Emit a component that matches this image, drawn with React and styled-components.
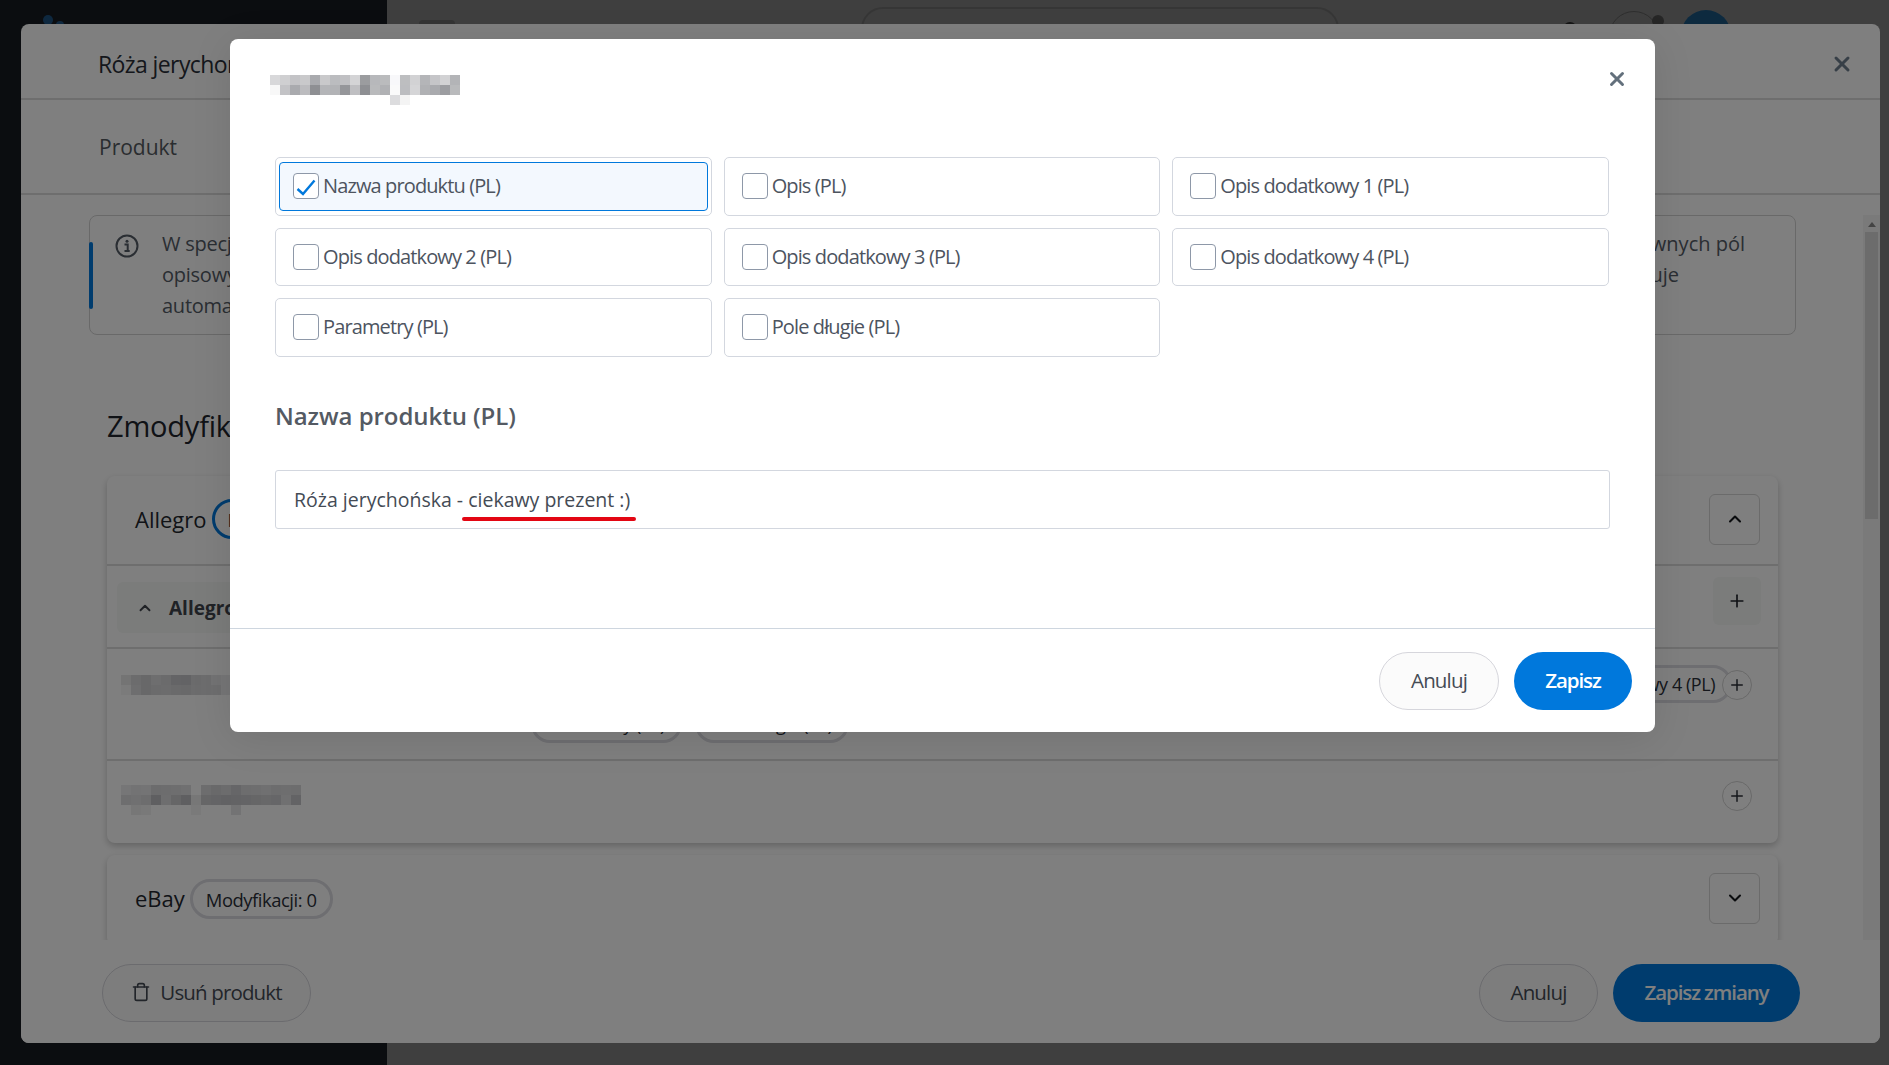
import React from 'react';
import styled, { createGlobalStyle } from 'styled-components';
import { Trash, ChevronUp, ChevronDown, Plus, X } from 'lucide-react';

const Global = createGlobalStyle`
  html, body { margin: 0; padding: 0; height: 100%; overflow: hidden; }
  #root { height: 100%; }
  * { box-sizing: border-box; }
  body { font-family: "Open Sans", "Noto Sans", "Liberation Sans", sans-serif; color: #3f4650; }
`;

const Stage = styled.div`
  position: relative;
  width: 100%;
  height: 100%;
  overflow: hidden;
`;
const Shell = styled.div`
  display: grid;
  grid-template-columns: 387px 1fr;
  height: 100%;
`;
const Sidebar = styled.aside`
  background: #2c3440;
  padding: 15px 0 0 43px;
`;
const LogoMark = styled.svg`
  display: block;
  width: 40px;
  height: 20px;
`;
const Main = styled.main`
  background: #fcfcfc;
`;
const TopBar = styled.header`
  display: flex;
  align-items: flex-start;
  height: 70px;
`;
const Burger = styled.div`
  width: 36px;
  height: 30px;
  margin: 20px 0 0 32px;
  border-radius: 4px;
  background: #d0d0d0;
`;
const Search = styled.div`
  width: 478px;
  height: 60px;
  margin: 7px 0 0 406px;
  border: 2px solid #dadada;
  border-radius: 22px;
`;
const Bell = styled.div`
  width: 14px;
  height: 14px;
  margin: 22px 0 0 224px;
  border-radius: 50%;
  background: #555;
`;
const HelpCircle = styled.div`
  position: relative;
  width: 50px;
  height: 50px;
  margin: 11px 0 0 32px;
  border: 1px solid #bbb;
  border-radius: 50%;
  &::after {
    content: '';
    position: absolute;
    right: -6px;
    top: 3px;
    width: 12px;
    height: 12px;
    border-radius: 50%;
    background: #999;
  }
`;
const Avatar = styled.div`
  width: 50px;
  height: 50px;
  margin: 10px 0 0 22px;
  border-radius: 50%;
  background: #34a8ff;
`;

const Backdrop = styled.div`
  position: absolute;
  inset: 0;
  background: rgba(0, 0, 0, 0.5);
`;

/* Outer modal (product editor) */
const EditorModal = styled.section`
  position: absolute;
  left: 21px;
  top: 24px;
  width: 1859px;
  height: 1019px;
  display: flex;
  flex-direction: column;
  background: #fff;
  border-radius: 8px;
  overflow: hidden;
`;
const EditorHead = styled.header`
  display: flex;
  align-items: center;
  justify-content: space-between;
  flex: 0 0 76px;
  padding: 6px 26px 0 77px;
  border-bottom: 2px solid #dcdcdc;
  font-size: 23px;
  letter-spacing: -0.6px;
  color: #2a2f38;
`;
const EditorTitle = styled.h2`
  margin: 0;
  font: inherit;
`;
const Tabs = styled.nav`
  display: flex;
  align-items: center;
  flex: 0 0 95px;
  padding: 0 0 0 78px;
  border-bottom: 2px solid #dcdcdc;
  font-size: 21px;
  color: #555a60;
`;
const BodyRow = styled.div`
  display: flex;
  flex: 1;
  min-height: 0;
`;
const Scroller = styled.div`
  flex: 1;
  min-width: 0;
  padding: 20px 67px 0 68px;
  overflow: hidden;
`;
const ScrollTrack = styled.div`
  flex: 0 0 17px;
  margin-top: 20px;
  background: #f4f4f4;
  padding: 0 2px;
  display: flex;
  flex-direction: column;
`;
const ScrollArrow = styled.div`
  width: 0;
  height: 0;
  margin: 7px auto 5px;
  border-left: 4px solid transparent;
  border-right: 4px solid transparent;
  border-bottom: 5px solid #888;
`;
const ScrollThumb = styled.div`
  height: 287px;
  background: #d8d8d8;
`;
const InfoBox = styled.div`
  position: relative;
  display: flex;
  height: 120px;
  padding: 12px 0 0 25px;
  border: 1.5px solid #d2d2d2;
  border-radius: 8px;
`;
const InfoAccent = styled.span`
  position: absolute;
  left: -1px;
  top: 26px;
  width: 4px;
  height: 67px;
  border-radius: 2px;
  background: #0078dc;
`;
const InfoIcon = styled.svg`
  flex: 0 0 24px;
  width: 24px;
  height: 24px;
  margin: 6px 23px 0 0;
`;
const InfoText = styled.div`
  font-size: 20px;
  line-height: 31px;
  color: #555c66;
`;
const InfoLine = styled.div`
  display: flex;
  justify-content: space-between;
  width: ${p => p.$width}px;
  height: 31px;
`;
const InfoLead = styled.span`
  letter-spacing: -0.25px;
`;
const SectionTitle = styled.h3`
  margin: 73px 0 32px 18px;
  font-size: 29px;
  line-height: 36px;
  font-weight: 500;
  letter-spacing: -0.2px;
  color: #20242c;
`;
const Card = styled.article`
  margin: 0 18px 12px;
  background: #fff;
  border-radius: 8px;
  box-shadow: 0 3px 7px rgba(0, 0, 0, 0.22);
`;
const CardHead = styled.div`
  display: flex;
  align-items: center;
  height: 90px;
  padding: 0 18px 2px 28px;
  border-bottom: 2px solid ${p => (p.$ruled ? '#dcdcdc' : 'transparent')};
`;
const CardName = styled.span`
  font-size: 22px;
  color: #23272e;
`;
const CountPill = styled.span`
  display: inline-flex;
  align-items: center;
  height: 40px;
  margin: ${p => (p.$active ? '0' : '2px')} 0 0 5px;
  padding: 0 13px;
  border: 3px solid ${p => (p.$active ? '#0078dc' : '#dcdce2')};
  border-radius: 20px;
  font-size: 18.4px;
  letter-spacing: -0.45px;
  color: #2a2f38;
`;
const SquareButton = styled.button`
  display: flex;
  align-items: center;
  justify-content: center;
  width: 51px;
  height: 51px;
  margin-left: auto;
  padding: 0;
  background: transparent;
  border: 1.5px solid #d6d6d6;
  border-radius: 6px;
  color: #15181d;
`;
const GroupRow = styled.div`
  display: flex;
  justify-content: space-between;
  height: 83px;
  padding: 11px 17px 0 10px;
  border-bottom: 2px solid #dcdcdc;
`;
const GroupLabel = styled.div`
  display: flex;
  align-items: center;
  gap: 15px;
  width: 800px;
  height: 51px;
  margin-top: 5px;
  padding-left: 19px;
  border-radius: 6px;
  background: #f6f8f7;
  font-size: 19px;
  font-weight: 700;
  color: #40454c;
`;
const GroupAdd = styled.button`
  display: flex;
  align-items: center;
  justify-content: center;
  width: 48px;
  height: 48px;
  padding: 0;
  border: 0;
  border-radius: 6px;
  background: #f6f8f7;
  color: #20242b;
`;
const FieldRow = styled.div`
  position: relative;
  display: flex;
  height: ${p => p.$height}px;
  padding: ${p => p.$pad}px 26px 0 14px;
  border-bottom: ${p => (p.$ruled ? '2px solid #dcdcdc' : '0')};
`;
const FieldName = styled.div`
  display: flex;
  align-items: flex-start;
  flex: 0 0 410px;
  padding-top: 10px;
  font-size: 17px;
  color: #333;
`;
const PillGroup = styled.div`
  display: flex;
  flex: 1;
  flex-direction: column;
  gap: 2px;
  margin-right: -10px;
  min-width: 0;
`;
const PillRow = styled.div`
  display: flex;
  justify-content: ${p => (p.$end ? 'flex-end' : 'flex-start')};
  gap: 13px;
`;
const Pill = styled.span`
  display: inline-flex;
  align-items: center;
  flex: none;
  height: 38px;
  padding: 0 14px;
  border: 3px solid #dcdce2;
  border-radius: 19px;
  font-size: 18px;
  letter-spacing: -0.45px;
  color: #2a2f38;
  white-space: nowrap;
`;
const RoundAdd = styled.button`
  position: relative;
  display: flex;
  align-items: center;
  justify-content: center;
  flex: 0 0 30px;
  width: 30px;
  height: 30px;
  margin: ${p => p.$top}px 0 0 auto;
  padding: 0;
  background: #fff;
  border: 1px solid #d2d2d2;
  border-radius: 50%;
  color: #2c3138;
`;
const EditorFoot = styled.footer`
  display: flex;
  flex: 0 0 103px;
  gap: 15px;
  padding: 24px 80px 0 81px;
  background: #fff;
`;
const PillButton = styled.button`
  display: inline-flex;
  align-items: center;
  justify-content: center;
  gap: 9px;
  width: ${p => p.$width}px;
  height: 58px;
  padding: 0 0 2px;
  border-radius: 29px;
  border: 1px solid ${p => (p.$primary ? 'transparent' : '#d6d6dc')};
  background: ${p => (p.$primary ? '#0078dc' : '#fbfbfb')};
  color: ${p => (p.$primary ? '#fff' : '#454b55')};
  font-family: inherit;
  font-size: 20.5px;
  font-weight: ${p => (p.$primary ? 600 : 500)};
  letter-spacing: ${p => (p.$primary ? '-1.1px' : '-0.85px')};
  margin-left: ${p => (p.$push ? 'auto' : '0')};
`;

/* Front dialog */
const FieldDialog = styled.section`
  position: absolute;
  left: 230px;
  top: 39px;
  width: 1425px;
  height: 693px;
  display: flex;
  flex-direction: column;
  background: #fff;
  border-radius: 8px;
  box-shadow: 0 6px 40px rgba(0, 0, 0, 0.1);
`;
const DialogHead = styled.header`
  display: flex;
  justify-content: space-between;
  flex: 0 0 118px;
  padding: 36px 27px 0 40px;
`;
const CloseButton = styled.button`
  display: flex;
  width: 22px;
  height: 22px;
  margin-top: -7px;
  padding: 0;
  background: none;
  border: 0;
  color: #63707c;
`;
const MosaicSvg = styled.svg`
  display: block;
  flex: none;
`;
const DialogBody = styled.div`
  flex: 1;
  padding: 0 44px 0 45px;
`;
const OptionGrid = styled.div`
  display: grid;
  grid-template-columns: repeat(3, 1fr);
  grid-auto-rows: 58.5px;
  gap: 12px;
  width: 1334px;
`;
const Option = styled.label`
  display: flex;
  padding: 4px 3px;
  border: 1px solid #d3d7df;
  border-radius: 5px;
  background: #fff;
`;
const OptionInner = styled.span`
  display: flex;
  align-items: center;
  flex: 1;
  gap: 4px;
  padding-left: 13px;
  border: 1.5px solid ${p => (p.$on ? '#0078dc' : 'transparent')};
  border-radius: 4px;
  background: ${p => (p.$on ? '#f3f8fe' : 'transparent')};
`;
const OptionText = styled.span`
  margin-bottom: 1.5px;
  font-size: 20px;
  letter-spacing: -0.88px;
  color: #4d545f;
`;
const CheckBox = styled.span`
  display: flex;
  flex: 0 0 26px;
  width: 26px;
  height: 26px;
  background: #fff;
  border: 1px solid #8e98a8;
  border-radius: 4px;
`;
const FieldHeading = styled.h3`
  margin: 42px 0 37px;
  font-size: 24px;
  line-height: 34px;
  font-weight: 600;
  letter-spacing: -0.05px;
  color: #545a63;
`;
const ValueBox = styled.div`
  position: relative;
  display: flex;
  align-items: center;
  width: 1335px;
  height: 59px;
  padding: 0 18px;
  border: 1px solid #d3d7df;
  border-radius: 3px;
  font-size: 19.5px;
  color: #444b55;
`;
const RedMark = styled.span`
  position: absolute;
  left: 186px;
  top: 46px;
  width: 174px;
  height: 4px;
  border-radius: 2px;
  background: #e30613;
`;
const DialogFoot = styled.footer`
  display: flex;
  flex: 0 0 104px;
  justify-content: flex-end;
  gap: 15px;
  padding: 23px 23px 0 0;
  border-top: 1.5px solid #ced6df;
`;

const Mosaic = ({ rows, cell = 10 }) => {
  const w = Math.max(...rows.map(r => r.length)) * cell;
  return (
    <MosaicSvg width={w} height={rows.length * cell} shapeRendering="crispEdges">
      {rows.flatMap((r, y) =>
        r.map((c, x) =>
          c ? <rect key={`${x}-${y}`} x={x * cell} y={y * cell} width={cell} height={cell} fill={c} /> : null
        )
      )}
    </MosaicSvg>
  );
};

const titleMosaic = [
  ['#d8d8da','#cfcfd1','#c3c3c6','#c9c9cb','#a9aaae','#c9c9cb','#bbbcbf','#c0c0c3','#d4d4d6','#9b9c9f','#b7b8bb','#babbbd','#f8f8fa','#bdbec0','#d2d2d4','#b4b5b8','#c5c5c8','#d2d2d4','#b3b4b7'],
  ['#f8f8f8','#c3c3c6','#a9aaae','#bcbcbf','#8e8f93','#b4b5b8','#b2b3b6','#95969a','#bfbfc2','#8e8f93','#b9babc','#b0b1b4','#fafafa','#bcbdc0','#d5d5d7','#b0b1b4','#a9aaae','#9c9da1','#b9babc'],
  [null,null,null,null,null,null,null,null,null,null,null,null,'#dcdcde','#f4f4f4'],
];
const blurA = [
  ['#e8e8e8','#d8d8da','#d0d0d3','#dcdcde','#d6d6d8','#c8c8cc','#c6c6ca','#d6d6d8','#dadadc','#e6e6e8','#ececee'],
  ['#f6f6f6','#dcdcde','#d0d0d3','#d6d6d8','#d8d8da','#d4d4d7','#d2d2d5','#d8d8da','#dadadc','#dcdcde','#ececee'],
];
const blurB = [
  ['#ececee','#e6e6e8','#e8e8ea','#d8d8da','#dadadc','#dcdcde','#e0e0e2',null,'#dadadc','#d2d2d5','#d8d8da','#cdcdd0','#dadadc','#dcdcde','#e0e0e2','#dadadc','#dcdcde','#dadadc'],
  ['#dcdcde','#e0e0e2','#dadadc','#bebec2','#dcdcde','#cccccf','#bebec2','#eeeeee','#cccccf','#c8c8cc','#c4c4c8','#c6c6ca','#c8c8cc','#cccccf','#d0d0d3','#cdcdd0','#e0e0e2','#c6c6ca'],
  [null,'#eeeeee','#f2f2f2',null,null,null,null,'#f4f4f4',null,null,null,'#e6e6e8',null,null,null],
];

const OPTIONS = [
  'Nazwa produktu (PL)', 'Opis (PL)', 'Opis dodatkowy 1 (PL)',
  'Opis dodatkowy 2 (PL)', 'Opis dodatkowy 3 (PL)', 'Opis dodatkowy 4 (PL)',
  'Parametry (PL)', 'Pole długie (PL)',
];

const AddIcon = ({ size = 18 }) => <Plus size={size} strokeWidth={2} />;

export default function App() {
  return (
    <Stage>
      <Global />
      <Shell>
        <Sidebar>
          <LogoMark viewBox="0 0 40 20">
            <circle cx="5" cy="5" r="5" fill="#3aa0ff" />
            <circle cx="17" cy="10" r="4" fill="#3aa0ff" />
          </LogoMark>
        </Sidebar>
        <Main>
          <TopBar>
            <Burger />
            <Search />
            <Bell />
            <HelpCircle />
            <Avatar />
          </TopBar>
        </Main>
      </Shell>
      <Backdrop />

      <EditorModal>
        <EditorHead>
          <EditorTitle>Róża jerychońska - ciekawy prezent :)</EditorTitle>
          <X size={24} strokeWidth={3} color="#6e7e8e" />
        </EditorHead>
        <Tabs>Produkt</Tabs>
        <BodyRow>
          <Scroller>
            <InfoBox>
              <InfoAccent />
              <InfoIcon viewBox="0 0 24 24" fill="none">
                <circle cx="12" cy="12" r="10.5" stroke="#555c66" strokeWidth="2" />
                <circle cx="12" cy="7.2" r="1.5" fill="#555c66" />
                <path d="M9.5 10.5h3.2v6.2M9.5 17h5.2" stroke="#555c66" strokeWidth="2" />
              </InfoIcon>
              <InfoText>
                <InfoLine $width={1583}><InfoLead>W specjalnych polach</InfoLead><span>wnych pól</span></InfoLine>
                <InfoLine $width={1517}><InfoLead>opisowych produktu</InfoLead><span>uje</span></InfoLine>
                <InfoLine $width={800}><InfoLead>automatycznie</InfoLead></InfoLine>
              </InfoText>
            </InfoBox>
            <SectionTitle>Zmodyfikowane pola</SectionTitle>
            <Card>
              <CardHead $ruled>
                <CardName>Allegro</CardName>
                <CountPill $active>Modyfikacji: 2</CountPill>
                <SquareButton><ChevronUp size={20} strokeWidth={2.5} /></SquareButton>
              </CardHead>
              <GroupRow>
                <GroupLabel><ChevronUp size={18} strokeWidth={2.5} />Allegro</GroupLabel>
                <GroupAdd><AddIcon size={20} /></GroupAdd>
              </GroupRow>
              <FieldRow $height={112} $pad={16} $ruled>
                <FieldName><Mosaic rows={blurA} />:</FieldName>
                <PillGroup>
                  <PillRow $end>
                    <Pill>Nazwa produktu (PL)</Pill>
                    <Pill>Opis (PL)</Pill>
                    <Pill>Opis dodatkowy 1 (PL)</Pill>
                    <Pill>Opis dodatkowy 2 (PL)</Pill>
                    <Pill>Opis dodatkowy 3 (PL)</Pill>
                    <Pill>Opis dodatkowy 4 (PL)</Pill>
                  </PillRow>
                  <PillRow>
                    <Pill>Parametry (PL)</Pill>
                    <Pill>Pole długie (PL)</Pill>
                  </PillRow>
                </PillGroup>
                <RoundAdd $top={5}><AddIcon /></RoundAdd>
              </FieldRow>
              <FieldRow $height={82} $pad={14}>
                <FieldName><Mosaic rows={blurB} /></FieldName>
                <RoundAdd $top={6}><AddIcon /></RoundAdd>
              </FieldRow>
            </Card>
            <Card>
              <CardHead>
                <CardName>eBay</CardName>
                <CountPill>Modyfikacji: 0</CountPill>
                <SquareButton><ChevronDown size={20} strokeWidth={2.5} /></SquareButton>
              </CardHead>
            </Card>
          </Scroller>
          <ScrollTrack>
            <ScrollArrow />
            <ScrollThumb />
          </ScrollTrack>
        </BodyRow>
        <EditorFoot>
          <PillButton $width={209}><Trash size={20} strokeWidth={2} />Usuń produkt</PillButton>
          <PillButton $width={119} $push>Anuluj</PillButton>
          <PillButton $width={187} $primary>Zapisz zmiany</PillButton>
        </EditorFoot>
      </EditorModal>
      <Backdrop />

      <FieldDialog>
        <DialogHead>
          <Mosaic rows={titleMosaic} />
          <CloseButton><X size={22} strokeWidth={3.2} /></CloseButton>
        </DialogHead>
        <DialogBody>
          <OptionGrid>
            {OPTIONS.map((name, i) => (
              <Option key={name}>
                <OptionInner $on={i === 0}>
                  <CheckBox>
                    {i === 0 && (
                      <svg viewBox="0 0 24 24" width="24" height="24" fill="none">
                        <path d="M3.5 15l5.5 5L20.5 6.5" stroke="#0078dc" strokeWidth="2.4" />
                      </svg>
                    )}
                  </CheckBox>
                  <OptionText>{name}</OptionText>
                </OptionInner>
              </Option>
            ))}
          </OptionGrid>
          <FieldHeading>Nazwa produktu (PL)</FieldHeading>
          <ValueBox>
            Róża jerychońska - ciekawy prezent :)
            <RedMark />
          </ValueBox>
        </DialogBody>
        <DialogFoot>
          <PillButton $width={120}>Anuluj</PillButton>
          <PillButton $width={118} $primary>Zapisz</PillButton>
        </DialogFoot>
      </FieldDialog>
    </Stage>
  );
}
